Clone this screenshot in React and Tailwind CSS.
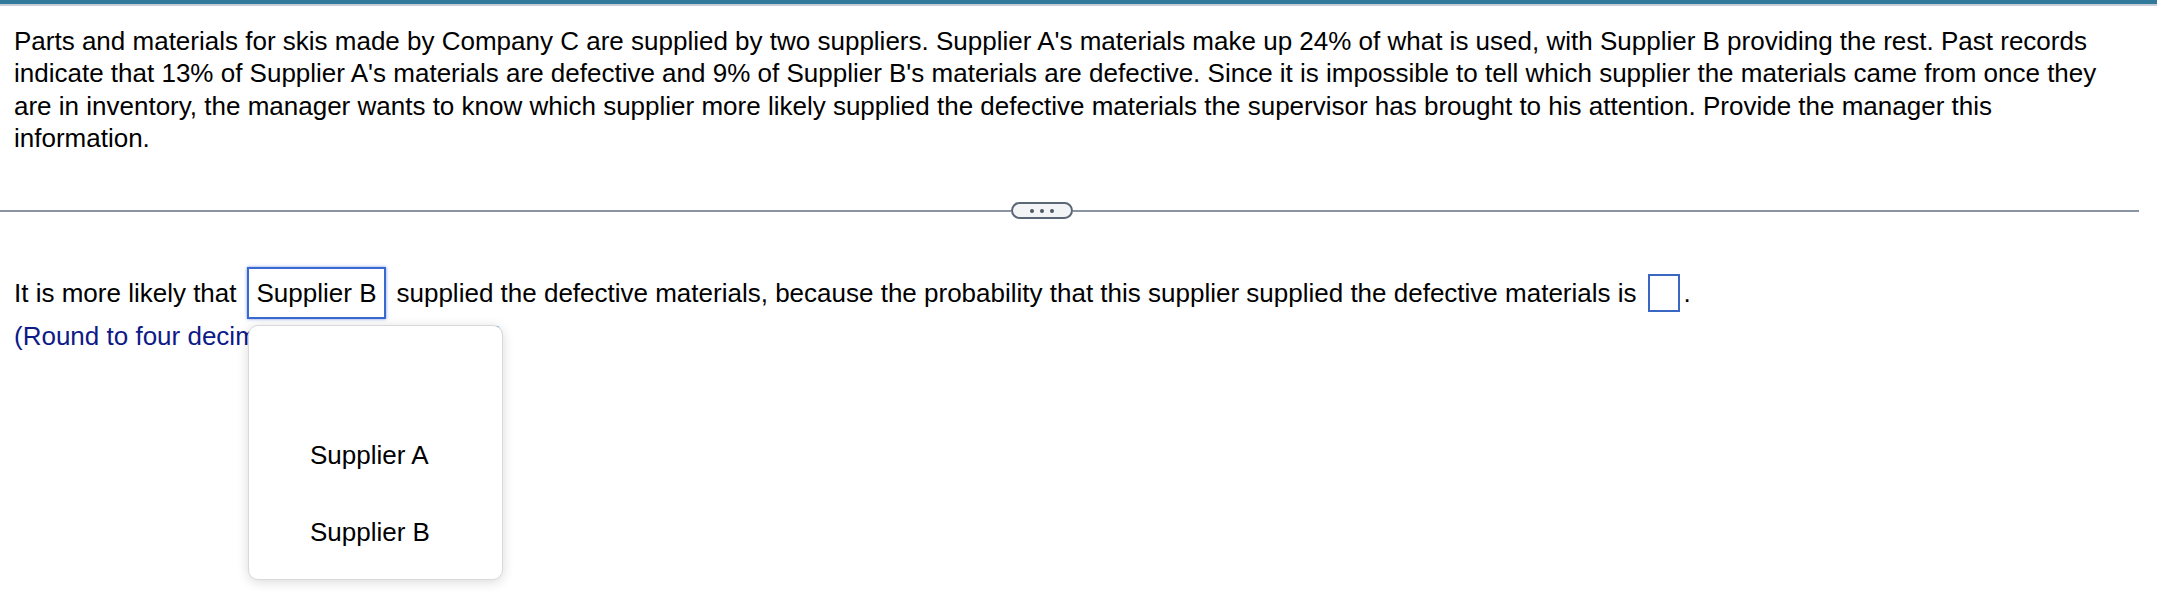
import React from "react";

export default function App() {
  return (
    <div className="relative w-[2178px] h-[607px] bg-white text-black font-['Liberation_Sans',Arial,sans-serif] text-[26px] overflow-hidden">
      <div className="w-[2157px] h-[4px] bg-[#317a9b]" />
      <div className="w-[2157px] h-[2px] bg-[#c9cdd8]" />

      <div className="pl-[14px] pt-[19px] leading-[32.3px]">
        <div className="whitespace-nowrap">Parts and materials for skis made by Company C are supplied by two suppliers. Supplier A's materials make up 24% of what is used, with Supplier B providing the rest. Past records</div>
        <div className="whitespace-nowrap">indicate that 13% of Supplier A's materials are defective and 9% of Supplier B's materials are defective. Since it is impossible to tell which supplier the materials came from once they</div>
        <div className="whitespace-nowrap">are in inventory, the manager wants to know which supplier more likely supplied the defective materials the supervisor has brought to his attention. Provide the manager this</div>
        <div className="whitespace-nowrap">information.</div>
      </div>

      <div className="mt-[48px] flex items-center w-[2139px] h-[17px]">
        <div className="w-[1011px] h-[2px] bg-[#8a94a4]" />
        <div className="w-[62px] h-[17px] box-border border-2 border-[#5b6776] rounded-full bg-[#f3f4f6] flex items-center justify-center gap-[6px]">
          <span className="w-[4px] h-[4px] rounded-full bg-[#4f5965]" />
          <span className="w-[4px] h-[4px] rounded-full bg-[#4f5965]" />
          <span className="w-[4px] h-[4px] rounded-full bg-[#4f5965]" />
        </div>
        <div className="flex-1 h-[2px] bg-[#8a94a4]" />
      </div>

      <div className="mt-[48px] pl-[14px] flex items-center whitespace-nowrap">
        <span>It is more likely that</span>
        <span className="ml-[10px] h-[52px] box-border border-2 border-[#3a6ad0] shadow-[0_0_3px_rgba(70,110,220,0.7)] px-[8px] flex items-center">Supplier B</span>
        <span className="ml-[10px]">supplied the defective materials, because the probability that this supplier supplied the defective materials is</span>
        <span className="ml-[11px] w-[32px] h-[38px] box-border border-2 border-[#3a67c4]" />
        <span className="ml-[4px]">.</span>
      </div>
      <div className="pl-[14px] leading-[32px] mt-[1px] text-[#0d1a87] whitespace-nowrap">(Round to four decimal places as needed.)</div>

      <div className="absolute left-[248px] top-[325px] w-[255px] h-[255px] box-border bg-white border border-[#d9d9d9] rounded-[10px] shadow-[0_2px_12px_rgba(0,0,0,0.15)] pt-[91px] pl-[61px]">
        <div className="h-[77px] flex items-center">Supplier A</div>
        <div className="h-[77px] flex items-center">Supplier B</div>
      </div>
    </div>
  );
}
